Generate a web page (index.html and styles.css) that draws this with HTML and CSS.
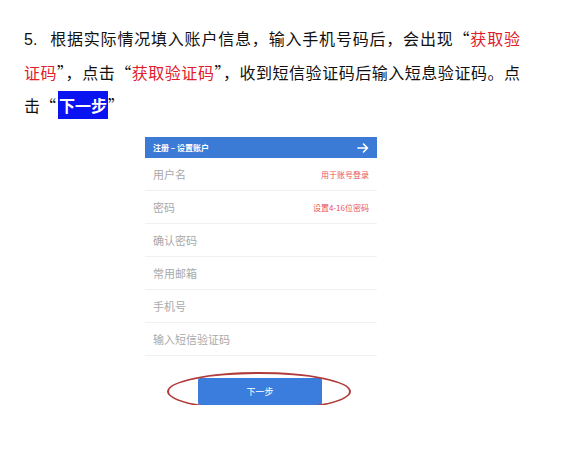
FILE: index.html
```html
<!DOCTYPE html>
<html lang="zh-CN">
<head>
    <meta charset="UTF-8">
    <meta name="viewport" content="width=device-width, initial-scale=1.0">
    <title>注册步骤 5</title>
    <link rel="stylesheet" href="styles.css">
</head>
<body>
    <div class="doc">
        <p class="step">
            <span class="line"><span class="num">5.</span>根据实际情况填入账户信息，输入手机号码后，会出现“<span class="red">获取验</span></span>
            <span class="line"><span class="red">证码</span>”，点击“<span class="red">获取验证码</span>”，收到短信验证码后输入短息验证码。点</span>
            <span class="line last">击“<span class="mark">下一步</span>”</span>
        </p>

        <div class="phone">
            <div class="bar">
                <span class="bar-title">注册 – 设置账户</span>
                <svg class="bar-arrow" width="12" height="10" viewBox="0 0 12 10">
                    <path d="M1 5 H10.5 M6.5 1 L10.5 5 L6.5 9" fill="none" stroke="#fff" stroke-width="1.6" stroke-linecap="round" stroke-linejoin="round"/>
                </svg>
            </div>
            <div class="field"><span>用户名</span><span class="hint">用于账号登录</span></div>
            <div class="field"><span>密码</span><span class="hint">设置4-16位密码</span></div>
            <div class="field"><span>确认密码</span></div>
            <div class="field"><span>常用邮箱</span></div>
            <div class="field"><span>手机号</span></div>
            <div class="field"><span>输入短信验证码</span></div>
        </div>

        <div class="action">
            <div class="btn-wrap">
                <button class="next">下一步</button>
                <span class="circle"></span>
            </div>
        </div>
    </div>
</body>
</html>
```

FILE: styles.css
```css
* {
    margin: 0;
    padding: 0;
    box-sizing: border-box;
}

body {
    background: #fff;
    font-family: "Noto Sans CJK SC", "Liberation Sans", sans-serif;
    color: #111;
}

.doc {
    padding: 22px 0 0 24px;
    width: 520px;
}

.step {
    font-size: 16px;
    line-height: 33px;
    width: 496px;
}

.line {
    display: block;
    text-align: justify;
    text-align-last: justify;
}

.line.last {
    text-align-last: left;
}

.num {
    font-family: "Liberation Sans", sans-serif;
    margin-right: 12px;
}

.red {
    color: #e0202c;
}

.mark {
    background: #0a14f0;
    color: #fff;
    font-weight: bold;
    padding: 2px 1px;
    margin-left: 2px;
}

.phone {
    margin: 15px 0 0 121px;
    width: 232px;
}

.bar {
    height: 21px;
    background: #3b7bd6;
    display: flex;
    align-items: center;
    justify-content: space-between;
    padding: 0 8px 0 8px;
}

.bar-title {
    color: #fff;
    font-size: 8px;
    font-weight: bold;
}

.field {
    height: 33px;
    display: flex;
    align-items: center;
    justify-content: space-between;
    padding: 0 8px;
    border-bottom: 1px solid #f1f1f1;
    font-size: 11px;
    color: #a9a9a9;
}

.hint {
    font-size: 8px;
    color: #e9525a;
}

.action {
    display: flex;
    justify-content: center;
    width: 472px;
    margin-top: 22px;
}

.btn-wrap {
    position: relative;
}

.next {
    width: 124px;
    height: 27px;
    border: none;
    border-radius: 2px;
    background: #3a7ddc;
    color: #fff;
    font-family: "Noto Sans CJK SC", sans-serif;
    font-size: 9px;
    display: block;
}

.circle {
    position: absolute;
    left: -31px;
    top: -6px;
    width: 184px;
    height: 39px;
    border: 2px solid #b23c3c;
    border-radius: 50%;
}
```
